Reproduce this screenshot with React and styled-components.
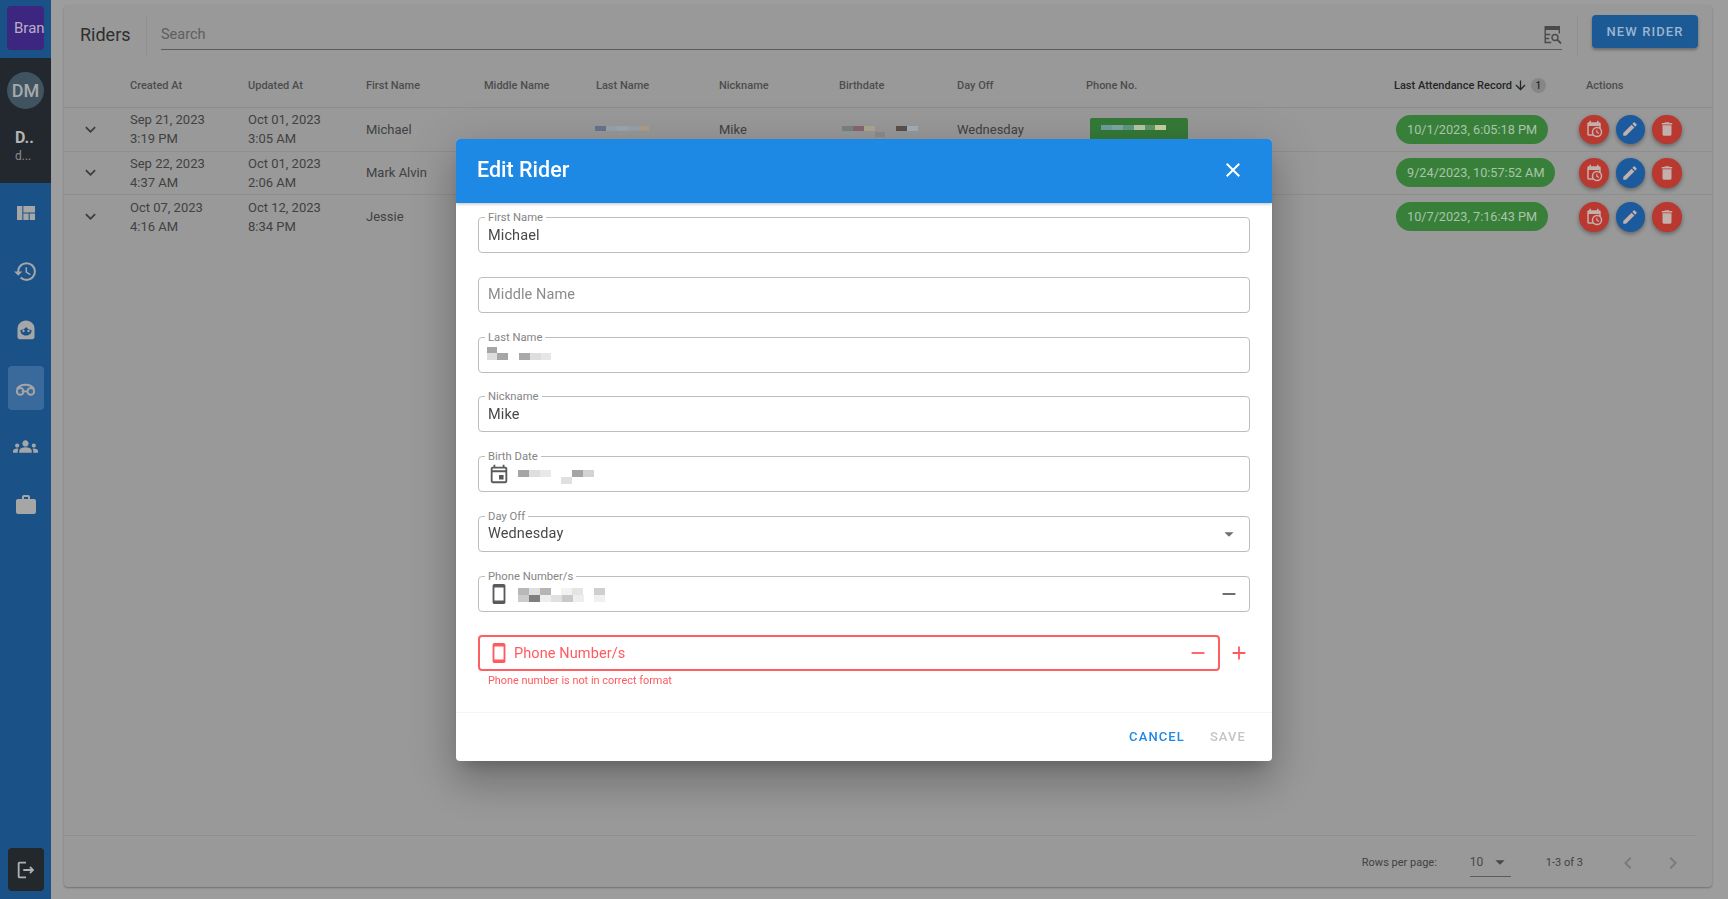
import styled, { createGlobalStyle } from "styled-components";
import {
    MdAdd,
    MdArrowDownward,
    MdArrowDropDown,
    MdChevronLeft,
    MdChevronRight,
    MdClose,
    MdDelete,
    MdEdit,
    MdGroups,
    MdKeyboardArrowDown,
    MdOutlineEvent,
    MdOutlineLogout,
    MdRemove,
    MdRestore,
    MdSmartphone,
    MdViewQuilt,
    MdWork,
} from "react-icons/md";

const columns = "66px 118px 118px 118px 112px 123px 120px 118px 129px 308px 192px 1fr";

const riders = [
    {
        created: ["Sep 21, 2023", "3:19 PM"],
        updated: ["Oct 01, 2023", "3:05 AM"],
        first: "Michael",
        nickname: "Mike",
        dayOff: "Wednesday",
        redacted: true,
        attendance: "10/1/2023, 6:05:18 PM",
    },
    {
        created: ["Sep 22, 2023", "4:37 AM"],
        updated: ["Oct 01, 2023", "2:06 AM"],
        first: "Mark Alvin",
        attendance: "9/24/2023, 10:57:52 AM",
    },
    {
        created: ["Oct 07, 2023", "4:16 AM"],
        updated: ["Oct 12, 2023", "8:34 PM"],
        first: "Jessie",
        attendance: "10/7/2023, 7:16:43 PM",
    },
];

const lastNameRow = [
    [0, 0, 11, 5, "#66758e"],
    [11, 0, 11, 5, "#98a3ae"],
    [22, 0, 11, 5, "#9ca7b1"],
    [33, 0, 11, 5, "#98a2aa"],
    [44, 0, 10, 5, "#ad9f88"],
];

const birthdateRow = [
    [0, 0, 11, 5, "#77857f"],
    [11, 0, 11, 5, "#8a6476"],
    [22, 0, 11, 5, "#aca78f"],
    [33, 6, 10, 5, "#8c8c8c"],
    [54, 0, 11, 5, "#5a514b"],
    [65, 0, 11, 5, "#a3b0b9"],
];

const phoneChip = [
    [0, 0, 11, 5, "#6f9f9f"],
    [11, 0, 11, 5, "#7fa8a0"],
    [22, 0, 11, 5, "#5f9a80"],
    [33, 0, 11, 5, "#b8c6a8"],
    [44, 0, 10, 5, "#5e9a68"],
    [54, 0, 11, 5, "#cbd0a0"],
];

const lastNameField = [
    [0, 0, 10, 6, "#a6a6a6"],
    [0, 6, 10, 7, "#dddddd"],
    [10, 6, 11, 7, "#a6a6a6"],
    [32, 6, 11, 7, "#a9a9a9"],
    [43, 6, 11, 7, "#dddddd"],
    [54, 6, 10, 7, "#e6e6e6"],
];

const birthField = [
    [0, 0, 11, 7, "#a5a5a5"],
    [11, 0, 11, 7, "#dedede"],
    [22, 0, 11, 7, "#e8e8e8"],
    [43, 7, 11, 7, "#e0e0e0"],
    [54, 0, 11, 7, "#a5a5a5"],
    [65, 0, 11, 7, "#d3d3d3"],
];

const phoneField = [
    [0, 0, 11, 7, "#b8b8b8"],
    [11, 0, 11, 7, "#dfdfdf"],
    [22, 0, 11, 7, "#b5b5b5"],
    [43, 0, 11, 7, "#f2f2f2"],
    [54, 0, 11, 7, "#e4e4e4"],
    [76, 0, 11, 7, "#cfcfcf"],
    [0, 7, 11, 7, "#cbcbcb"],
    [11, 7, 11, 7, "#7f7f7f"],
    [22, 7, 11, 7, "#eeeeee"],
    [33, 7, 11, 7, "#e0e0e0"],
    [44, 7, 11, 7, "#c9c9c9"],
    [55, 7, 11, 7, "#eeeeee"],
    [76, 7, 11, 7, "#f0f0f0"],
];

const Mosaic = ({ tiles, width, height, top = 0, left = 0 }) => (
    <MosaicSvg $top={top} $left={left} width={width} height={height} viewBox={`0 0 ${width} ${height}`}>
        {tiles.map(([x, y, w, h, fill]) => (
            <rect key={`${x}-${y}`} x={x} y={y} width={w} height={h} fill={fill} />
        ))}
    </MosaicSvg>
);

const FaceIcon = () => (
    <svg width="24" height="24" viewBox="0 0 24 24">
        <path
            fill="#a6a6a6"
            d="M12 2.5c-5 0-8.5 3.6-8.5 8.5v8c0 1.2.9 2.2 2.2 2.2h12.6c1.3 0 2.2-1 2.2-2.2v-8c0-4.9-3.500-8.500-8.500-8.500z"
        />
        <path fill="#1a5187" d="M6.500 12c2.500 0 4.200-1 5.700-3 1.300 1.900 3 3 5.300 3 .4 3-2 5.500-5.500 5.500S6.100 15 6.500 12z" />
        <circle cx="9.500" cy="13" r="1.200" fill="#a6a6a6" />
        <circle cx="14.500" cy="13" r="1.200" fill="#a6a6a6" />
    </svg>
);

const BikeIcon = () => (
    <svg width="23" height="23" viewBox="0 0 24 24" fill="none" stroke="#a6a6a6" strokeWidth="2">
        <circle cx="6.500" cy="15" r="3.500" />
        <circle cx="17.500" cy="15" r="3.500" />
        <path d="M3 12.500C5 9 8.500 8 12 8c3.500 0 7 1 9 4.500M8 15h6" />
    </svg>
);

const CalendarClockIcon = () => (
    <svg width="18" height="18" viewBox="0 0 24 24" fill="currentColor">
        <path d="M15,13H16.5V15.82L18.94,17.23L18.19,18.53L15,16.69V13M19,8H5V19H9.67C9.24,18.09 9,17.07 9,16A7,7 0 0,1 16,9C17.07,9 18.09,9.24 19,9.67V8M5,21C3.89,21 3,20.1 3,19V5C3,3.89 3.89,3 5,3H6V1H8V3H16V1H18V3H19A2,2 0 0,1 21,5V11.1C22.24,12.36 23,14.09 23,16A7,7 0 0,1 16,23C14.09,23 12.36,22.24 11.1,21H5M16,11A5,5 0 0,0 11,16A5,5 0 0,0 16,21A5,5 0 0,0 21,16A5,5 0 0,0 16,11Z" />
    </svg>
);

const TableSearchIcon = () => (
    <svg width="18" height="18" viewBox="0 0 18 18" fill="none" stroke="#4a4a4a" strokeWidth="1.400">
        <rect x="0.500" y="0" width="15.500" height="4" fill="#4a4a4a" stroke="none" />
        <path d="M1.200 4v12.500h6M1.200 8.500h5M1.200 12.500h4M15.300 4v3.500" />
        <circle cx="11" cy="11.500" r="3" />
        <path d="M13.200 13.700L17 17.500" strokeWidth="1.800" />
    </svg>
);

const App = () => {
    return (
        <>
            <GlobalStyle />
            <Page>
                <Sidebar>
                    <Brand>Bran</Brand>
                    <UserBlock>
                        <Avatar>DM</Avatar>
                        <UserName>D..</UserName>
                        <UserMail>d...</UserMail>
                    </UserBlock>
                    <Nav>
                        <NavItem><MdViewQuilt size={24} /></NavItem>
                        <NavItem><MdRestore size={25} /></NavItem>
                        <NavItem><FaceIcon /></NavItem>
                        <NavItem $active><BikeIcon /></NavItem>
                        <NavItem><MdGroups size={25} /></NavItem>
                        <NavItem><MdWork size={24} /></NavItem>
                    </Nav>
                    <LogoutButton><MdOutlineLogout size={22} /></LogoutButton>
                </Sidebar>
                <Main>
                    <Panel>
                        <Toolbar>
                            <ToolbarTitle>Riders</ToolbarTitle>
                            <ToolbarDivider />
                            <SearchBox>
                                <SearchText>Search</SearchText>
                                <TableSearchIcon />
                            </SearchBox>
                            <ToolbarDivider />
                            <NewRiderButton>NEW RIDER</NewRiderButton>
                        </Toolbar>
                        <HeaderRow>
                            <span />
                            <HeaderCell>Created At</HeaderCell>
                            <HeaderCell>Updated At</HeaderCell>
                            <HeaderCell>First Name</HeaderCell>
                            <HeaderCell>Middle Name</HeaderCell>
                            <HeaderCell>Last Name</HeaderCell>
                            <HeaderCell>Nickname</HeaderCell>
                            <HeaderCell>Birthdate</HeaderCell>
                            <HeaderCell>Day Off</HeaderCell>
                            <HeaderCell>Phone No.</HeaderCell>
                            <SortedCell>
                                Last Attendance Record
                                <MdArrowDownward size={15} />
                                <SortBadge>1</SortBadge>
                            </SortedCell>
                            <HeaderCell>Actions</HeaderCell>
                        </HeaderRow>
                        {riders.map((rider) => (
                            <Row key={rider.first}>
                                <ExpandCell><MdKeyboardArrowDown size={21} /></ExpandCell>
                                <Cell>{rider.created[0]}<br />{rider.created[1]}</Cell>
                                <Cell>{rider.updated[0]}<br />{rider.updated[1]}</Cell>
                                <Cell>{rider.first}</Cell>
                                <Cell />
                                <Cell>{rider.redacted && <Mosaic tiles={lastNameRow} width={54} height={5} top={-2} left={-1} />}</Cell>
                                <Cell>{rider.nickname}</Cell>
                                <Cell>{rider.redacted && <Mosaic tiles={birthdateRow} width={76} height={11} top={4} left={3} />}</Cell>
                                <Cell>{rider.dayOff}</Cell>
                                <Cell>
                                    {rider.redacted && (
                                        <PhoneChip><Mosaic tiles={phoneChip} width={65} height={5} /></PhoneChip>
                                    )}
                                </Cell>
                                <Cell><AttendancePill>{rider.attendance}</AttendancePill></Cell>
                                <ActionsCell>
                                    <RoundButton $color="#b93830"><CalendarClockIcon /></RoundButton>
                                    <RoundButton $color="#1c5a9e"><MdEdit size={18} /></RoundButton>
                                    <RoundButton $color="#b93830"><MdDelete size={18} /></RoundButton>
                                </ActionsCell>
                            </Row>
                        ))}
                        <FooterBar>
                            <FooterText>Rows per page:</FooterText>
                            <RowsSelect>10<MdArrowDropDown size={22} /></RowsSelect>
                            <FooterText>1-3 of 3</FooterText>
                            <PagerButtons>
                                <MdChevronLeft size={24} />
                                <MdChevronRight size={24} />
                            </PagerButtons>
                        </FooterBar>
                    </Panel>
                </Main>
            </Page>

            <Backdrop>
                <Dialog>
                    <DialogHeader>
                        <DialogTitle>Edit Rider</DialogTitle>
                        <MdClose size={24} />
                    </DialogHeader>
                    <DialogBody>
                        <Field>
                            <FieldLabel>First Name</FieldLabel>
                            <FieldValue>Michael</FieldValue>
                        </Field>
                        <Field>
                            <Placeholder>Middle Name</Placeholder>
                        </Field>
                        <Field>
                            <FieldLabel>Last Name</FieldLabel>
                            <Mosaic tiles={lastNameField} width={64} height={13} top={-3} left={-1} />
                        </Field>
                        <Field>
                            <FieldLabel>Nickname</FieldLabel>
                            <FieldValue>Mike</FieldValue>
                        </Field>
                        <Field>
                            <FieldLabel>Birth Date</FieldLabel>
                            <FieldIcon><MdOutlineEvent size={22} /></FieldIcon>
                            <Mosaic tiles={birthField} width={76} height={14} top={6} />
                        </Field>
                        <Field>
                            <FieldLabel>Day Off</FieldLabel>
                            <FieldValue>Wednesday</FieldValue>
                            <TrailingIcon><MdArrowDropDown size={22} /></TrailingIcon>
                        </Field>
                        <Field>
                            <FieldLabel>Phone Number/s</FieldLabel>
                            <FieldIcon><MdSmartphone size={22} /></FieldIcon>
                            <Mosaic tiles={phoneField} width={87} height={14} top={2} />
                            <TrailingIcon><MdRemove size={22} /></TrailingIcon>
                        </Field>
                        <ErrorGroup>
                            <ErrorRow>
                                <Field $error>
                                    <FieldIcon $error><MdSmartphone size={22} /></FieldIcon>
                                    <ErrorValue>Phone Number/s</ErrorValue>
                                    <TrailingIcon $error><MdRemove size={22} /></TrailingIcon>
                                </Field>
                                <AddButton><MdAdd size={22} /></AddButton>
                            </ErrorRow>
                            <HelperText>Phone number is not in correct format</HelperText>
                        </ErrorGroup>
                    </DialogBody>
                    <DialogFooter>
                        <TextButton $color="#1e88e5">CANCEL</TextButton>
                        <TextButton $color="#c4c4c4">SAVE</TextButton>
                    </DialogFooter>
                </Dialog>
            </Backdrop>
        </>
    );
};

const GlobalStyle = createGlobalStyle`
    * {
        box-sizing: border-box;
    }

    body {
        margin: 0;
        font-family: Roboto, "Liberation Sans", sans-serif;
        background-color: #9d9d9d;
        overflow: hidden;
    }
`;

const Page = styled.div`
    display: flex;
    height: 100vh;
`;

const Sidebar = styled.aside`
    display: flex;
    flex-direction: column;
    align-items: center;
    width: 51px;
    flex-shrink: 0;
    background-color: #1a5187;
    color: #a6a6a6;
`;

const Brand = styled.div`
    width: 37px;
    height: 44px;
    margin-top: 6px;
    padding-left: 7px;
    overflow: hidden;
    border-radius: 4px;
    background-color: #3d2680;
    color: #b9aecb;
    font-size: 15px;
    line-height: 44px;
    white-space: nowrap;
`;

const UserBlock = styled.div`
    display: flex;
    flex-direction: column;
    width: 100%;
    height: 125px;
    margin-top: 8px;
    padding: 14px 0 0 15px;
    background-color: #22282e;
`;

const Avatar = styled.div`
    display: flex;
    align-items: center;
    justify-content: center;
    width: 37px;
    height: 37px;
    margin-left: -8px;
    border-radius: 50%;
    background-color: #3f5460;
    color: #a9a9a9;
    font-size: 18px;
    font-weight: 500;
`;

const UserName = styled.div`
    margin-top: 20px;
    color: #b5b5b5;
    font-size: 16px;
    font-weight: 700;
    line-height: 18px;
`;

const UserMail = styled.div`
    margin-top: 2px;
    color: #8f8f8f;
    font-size: 12px;
    line-height: 14px;
`;

const Nav = styled.nav`
    display: flex;
    flex: 1;
    flex-direction: column;
    gap: 14.800px;
    margin-top: 8.500px;
`;

const NavItem = styled.div`
    display: flex;
    align-items: center;
    justify-content: center;
    width: 36px;
    height: 43.500px;
    border-radius: 4px;
    background-color: ${(props) => (props.$active ? "#396a9b" : "transparent")};
`;

const LogoutButton = styled.div`
    display: flex;
    align-items: center;
    justify-content: center;
    width: 36px;
    height: 43px;
    margin-bottom: 8px;
    border-radius: 4px;
    background-color: #23282d;
    color: #b0b0b0;
`;

const Main = styled.main`
    flex: 1;
    min-width: 0;
    padding: 5px 16px 12px 13px;
`;

const Panel = styled.section`
    display: flex;
    flex-direction: column;
    height: 100%;
    border-radius: 4px;
    background-color: #999999;
    box-shadow: 0 1px 2px rgba(0, 0, 0, 0.3);
`;

const Toolbar = styled.div`
    display: flex;
    height: 60px;
    padding: 0 14px 0 16px;
    flex-shrink: 0;
`;

const ToolbarTitle = styled.h1`
    width: 66px;
    margin: 0;
    color: #2e2e2e;
    font-size: 18px;
    font-weight: 400;
    line-height: 60px;
`;

const ToolbarDivider = styled.div`
    width: 1px;
    height: 38px;
    margin-top: 12px;
    background-color: #8f8f8f;
`;

const SearchBox = styled.div`
    display: flex;
    flex: 1;
    align-items: flex-end;
    justify-content: space-between;
    height: 33px;
    margin: 12px 15px 0 14px;
    padding: 0 0 5px;
    border-bottom: 1px solid #5c5c5c;
`;

const SearchText = styled.span`
    color: #5e5e5e;
    font-size: 14.500px;
    line-height: 18px;
`;

const NewRiderButton = styled.button`
    width: 106px;
    height: 33px;
    margin: 10px 0 0 14px;
    border: 0;
    border-radius: 4px;
    background-color: #1c5a96;
    box-shadow: 0 2px 3px rgba(0, 0, 0, 0.3);
    color: #9db5cc;
    font-family: inherit;
    font-size: 13px;
    font-weight: 500;
    letter-spacing: 1.100px;
`;

const HeaderRow = styled.div`
    display: grid;
    grid-template-columns: ${columns};
    align-items: center;
    height: 43px;
    padding-bottom: 1px;
    flex-shrink: 0;
    border-bottom: 1px solid #8d8d8d;
`;

const HeaderCell = styled.span`
    color: #4d4d4d;
    font-size: 11px;
    font-weight: 500;
    white-space: nowrap;
`;

const SortedCell = styled(HeaderCell)`
    display: flex;
    align-items: center;
    gap: 1px;
    color: #262626;
`;

const SortBadge = styled.span`
    width: 15px;
    height: 15px;
    margin-left: 2px;
    border-radius: 50%;
    background-color: #868686;
    font-size: 10px;
    line-height: 15px;
    text-align: center;
`;

const Row = styled.div`
    display: grid;
    grid-template-columns: ${columns};
    align-items: center;
    height: 43.500px;
    flex-shrink: 0;
    border-bottom: 1px solid #8e8e8e;

    &:nth-of-type(5) {
        border-bottom: 0;
    }
`;

const ExpandCell = styled.div`
    display: flex;
    padding-left: 16px;
    color: #3c3c3c;
`;

const Cell = styled.div`
    color: #414141;
    font-size: 13px;
    line-height: 19px;
    white-space: nowrap;
`;

const MosaicSvg = styled.svg`
    display: block;
    margin-top: ${(props) => props.$top}px;
    margin-left: ${(props) => props.$left}px;
`;

const PhoneChip = styled.div`
    display: flex;
    width: 98px;
    height: 40px;
    margin: 6px 0 -12px 4px;
    padding: 7px 0 0 11px;
    border-radius: 2px;
    background-color: #357a38;
`;

const AttendancePill = styled.span`
    display: inline-block;
    height: 29px;
    margin-left: 2px;
    padding: 0 11px;
    border-radius: 15px;
    background-color: #38803a;
    color: #a9c4aa;
    font-size: 12.700px;
    line-height: 29px;
`;

const ActionsCell = styled.div`
    display: flex;
    gap: 7px;
    margin-left: -7px;
`;

const RoundButton = styled.div`
    display: flex;
    align-items: center;
    justify-content: center;
    width: 29.500px;
    height: 29.500px;
    border-radius: 50%;
    background-color: ${(props) => props.$color};
    box-shadow: 0 2px 4px rgba(0, 0, 0, 0.35);
    color: #c2b0ad;
`;

const FooterBar = styled.div`
    display: flex;
    align-items: center;
    height: 52px;
    margin: auto 16px 0 0;
    padding: 2px 11px 0 0;
    justify-content: flex-end;
    border-top: 1px solid #8e8e8e;
`;

const FooterText = styled.span`
    color: #414141;
    font-size: 11px;
`;

const RowsSelect = styled.div`
    display: flex;
    align-items: center;
    justify-content: space-between;
    width: 41px;
    height: 28px;
    margin: 0 35px 0 33px;
    border-bottom: 1px solid #5c5c5c;
    color: #484848;
    font-size: 12px;
`;

const PagerButtons = styled.div`
    display: flex;
    gap: 21px;
    margin-left: 33px;
    color: #7b7b7b;
`;

const Backdrop = styled.div`
    position: fixed;
    inset: 0;
    display: flex;
    align-items: center;
    justify-content: center;
`;

const Dialog = styled.div`
    display: flex;
    flex-direction: column;
    width: 816px;
    height: 622px;
    overflow: hidden;
    border-radius: 4px;
    background-color: #fff;
    box-shadow: 0 11px 15px -7px rgba(0, 0, 0, 0.2), 0 24px 38px 3px rgba(0, 0, 0, 0.14),
        0 9px 46px 8px rgba(0, 0, 0, 0.12);
`;

const DialogHeader = styled.header`
    display: flex;
    align-items: center;
    justify-content: space-between;
    height: 64px;
    padding: 0 27px 2px 21px;
    flex-shrink: 0;
    background-color: #1e88e5;
    box-shadow: 0 1px 3px rgba(0, 0, 0, 0.25);
    color: #fff;
`;

const DialogTitle = styled.h2`
    margin: 0;
    font-size: 21.500px;
    font-weight: 500;
`;

const DialogBody = styled.div`
    display: flex;
    flex: 1;
    flex-direction: column;
    gap: 23.750px;
    padding: 14.500px 22px 0;
`;

const Field = styled.div`
    position: relative;
    display: flex;
    flex: ${(props) => (props.$error ? "1" : "0 0 36px")};
    align-items: center;
    height: 36px;
    padding-left: 9px;
    border: ${(props) => (props.$error ? "2px solid #ff5f63" : "1px solid #bdbdbd")};
    border-radius: 4px;
`;

const FieldLabel = styled.label`
    position: absolute;
    top: -7px;
    left: 6px;
    padding: 0 3px;
    background-color: #fff;
    color: #858585;
    font-size: 11.250px;
    line-height: 14px;
`;

const FieldValue = styled.span`
    color: #484848;
    font-size: 14.500px;
    letter-spacing: 0.100px;
`;

const Placeholder = styled(FieldValue)`
    color: #8b8b8b;
`;

const ErrorValue = styled(FieldValue)`
    margin-left: 0;
    color: #ff5a5f;
`;

const FieldIcon = styled.span`
    display: flex;
    width: ${(props) => (props.$error ? "26px" : "30px")};
    margin-left: ${(props) => (props.$error ? "-1px" : "0")};
    color: ${(props) => (props.$error ? "#ff5a5f" : "#5a5a5a")};
`;

const TrailingIcon = styled.span`
    display: flex;
    margin-left: auto;
    margin-right: 9px;
    color: ${(props) => (props.$error ? "#ff5a5f" : "#6f6f6f")};
`;

const ErrorGroup = styled.div`
    display: flex;
    flex-direction: column;
`;

const ErrorRow = styled.div`
    display: flex;
    align-items: center;
`;

const AddButton = styled.span`
    display: flex;
    margin-left: 8px;
    color: #ff5a5f;
`;

const HelperText = styled.span`
    margin: 3px 0 0 10px;
    color: #ff5a5f;
    font-size: 10.900px;
    line-height: 14px;
`;

const DialogFooter = styled.footer`
    display: flex;
    align-items: center;
    justify-content: flex-end;
    gap: 25px;
    height: 49px;
    padding-right: 26px;
    flex-shrink: 0;
    border-top: 1px solid #f4f4f4;
`;

const TextButton = styled.span`
    color: ${(props) => props.$color};
    font-size: 13px;
    font-weight: 500;
    letter-spacing: 1.100px;
`;

export default App;
